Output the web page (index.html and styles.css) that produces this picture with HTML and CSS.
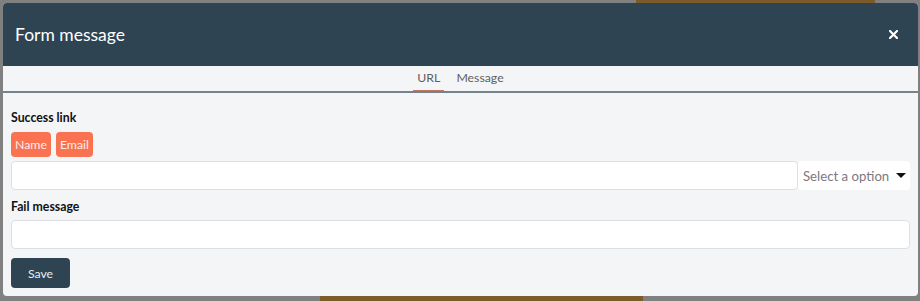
FILE: index.html
```html
<!DOCTYPE html>
<html lang="en">
<head>
    <meta charset="UTF-8">
    <meta name="viewport" content="width=device-width, initial-scale=1.0">
    <title>Form message</title>
    <link rel="stylesheet" href="styles.css">
</head>
<body>
    <div class="modal">
        <div class="modal-header">
            <h2 class="modal-title">Form message</h2>
            <svg class="modal-close" width="9" height="9" viewBox="0 0 9 9">
                <path d="M1 1 L8 8 M8 1 L1 8" stroke="#ffffff" stroke-width="2.2" stroke-linecap="square"/>
            </svg>
        </div>
        <div class="tabs">
            <span class="tab active">URL</span>
            <span class="tab">Message</span>
        </div>
        <div class="modal-body">
            <label class="field-label">Success link</label>
            <div class="tags">
                <span class="tag">Name</span>
                <span class="tag">Email</span>
            </div>
            <div class="input-row">
                <input type="text" class="text-input">
                <div class="select">
                    <span>Select a option</span>
                    <span class="caret"></span>
                </div>
            </div>
            <label class="field-label second">Fail message</label>
            <input type="text" class="text-input full">
            <button class="save-btn">Save</button>
        </div>
    </div>
</body>
</html>
```

FILE: styles.css
```css
body {
    margin: 0;
    height: 301px;
    overflow: hidden;
    font-family: Lato, "Open Sans", sans-serif;
    background-color: #808080;
    background-image:
        linear-gradient(#7b5b2c, #7b5b2c),
        linear-gradient(#7b5b2c, #7b5b2c);
    background-repeat: no-repeat;
    background-size: 239px 3px, 323px 5px;
    background-position: 636px 0, 320px 296px;
    padding: 3px 2px 0 3px;
    box-sizing: border-box;
}

.modal {
    width: 915px;
    height: 293px;
    background: #f4f5f7;
    border-radius: 4px;
    overflow: hidden;
    display: flex;
    flex-direction: column;
}

.modal-header {
    height: 63px;
    background: #2e4453;
    display: flex;
    align-items: center;
    justify-content: space-between;
    padding: 0 20px 0 12px;
    flex-shrink: 0;
}

.modal-title {
    margin: 0;
    color: #ffffff;
    font-size: 17.5px;
    font-weight: 400;
}

.modal-close {
    display: block;
}

.tabs {
    height: 25px;
    display: flex;
    justify-content: center;
    gap: 8px;
    border-bottom: 2px solid #76838c;
    flex-shrink: 0;
}

.tab {
    font-size: 12.3px;
    color: #606060;
    line-height: 24px;
    padding: 0 4px;
    border-bottom: 1px solid transparent;
}

.tab.active {
    border-bottom-color: #c0765e;
}

.modal-body {
    padding: 16px 8px 8px 8px;
    display: flex;
    flex-direction: column;
    align-items: flex-start;
}

.field-label {
    font-size: 12.3px;
    font-weight: 700;
    color: #111111;
    line-height: 18px;
    margin-bottom: 5px;
}

.field-label.second {
    margin-top: 8px;
    margin-bottom: 4px;
}

.tags {
    display: flex;
    gap: 5px;
    margin-bottom: 4px;
}

.tag {
    background: #f97352;
    color: #ffeee8;
    font-size: 12.3px;
    height: 25px;
    line-height: 25px;
    padding: 0 4px;
    border-radius: 4px;
}

.input-row {
    display: flex;
    width: 899px;
}

.text-input {
    height: 29px;
    box-sizing: border-box;
    border: 1px solid #dedfe2;
    border-radius: 4px;
    background: #ffffff;
    flex: 1;
    margin: 0;
    font-family: inherit;
}

.text-input.full {
    width: 899px;
    flex: none;
}

.select {
    width: 112px;
    height: 29px;
    background: #ffffff;
    border-radius: 4px;
    display: flex;
    align-items: center;
    justify-content: space-between;
    padding: 0 4px 0 5px;
    box-sizing: border-box;
    font-size: 13.2px;
    color: #7d7782;
}

.caret {
    width: 0;
    height: 0;
    border-left: 5px solid transparent;
    border-right: 5px solid transparent;
    border-top: 5px solid #111111;
}

.save-btn {
    margin-top: 9px;
    width: 59px;
    height: 30px;
    background: #2e4453;
    color: #e8edf0;
    border: none;
    border-radius: 4px;
    font-family: inherit;
    font-size: 12.3px;
}
```
